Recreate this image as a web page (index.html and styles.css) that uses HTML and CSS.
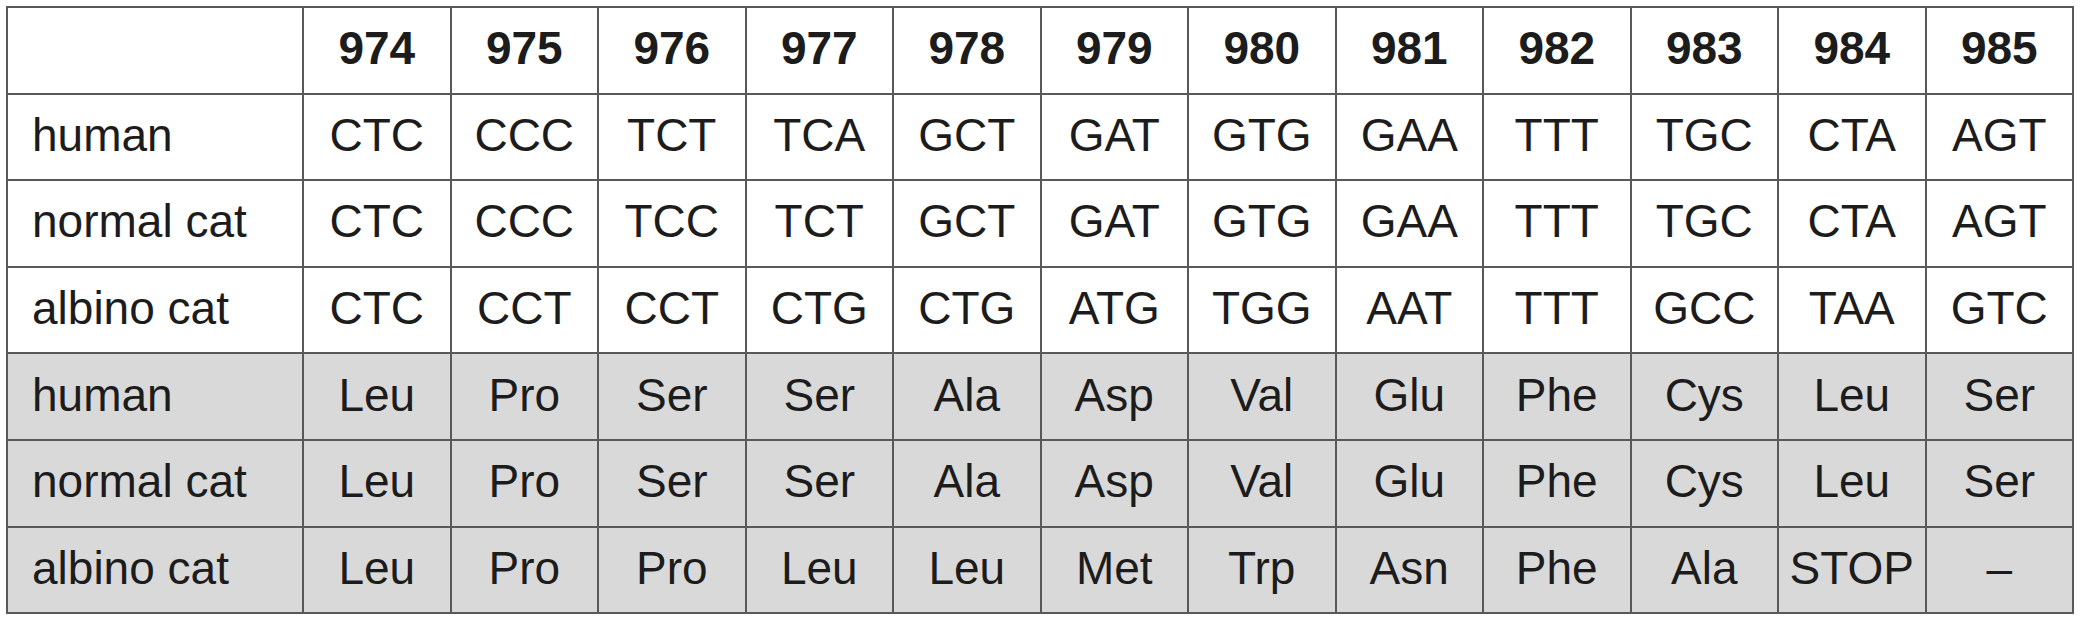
FILE: index.html
```html
<!DOCTYPE html>
<html>
<head>
<meta charset="utf-8">
<link rel="stylesheet" href="styles.css">
</head>
<body>
<table class="codons">
  <colgroup>
    <col class="label-col">
    <col span="12">
  </colgroup>
  <thead>
    <tr>
      <th></th><th>974</th><th>975</th><th>976</th><th>977</th><th>978</th><th>979</th><th>980</th><th>981</th><th>982</th><th>983</th><th>984</th><th>985</th>
    </tr>
  </thead>
  <tbody>
    <tr>
      <td class="label">human</td><td>CTC</td><td>CCC</td><td>TCT</td><td>TCA</td><td>GCT</td><td>GAT</td><td>GTG</td><td>GAA</td><td>TTT</td><td>TGC</td><td>CTA</td><td>AGT</td>
    </tr>
    <tr>
      <td class="label">normal cat</td><td>CTC</td><td>CCC</td><td>TCC</td><td>TCT</td><td>GCT</td><td>GAT</td><td>GTG</td><td>GAA</td><td>TTT</td><td>TGC</td><td>CTA</td><td>AGT</td>
    </tr>
    <tr>
      <td class="label">albino cat</td><td>CTC</td><td>CCT</td><td>CCT</td><td>CTG</td><td>CTG</td><td>ATG</td><td>TGG</td><td>AAT</td><td>TTT</td><td>GCC</td><td>TAA</td><td>GTC</td>
    </tr>
    <tr class="shaded">
      <td class="label">human</td><td>Leu</td><td>Pro</td><td>Ser</td><td>Ser</td><td>Ala</td><td>Asp</td><td>Val</td><td>Glu</td><td>Phe</td><td>Cys</td><td>Leu</td><td>Ser</td>
    </tr>
    <tr class="shaded">
      <td class="label">normal cat</td><td>Leu</td><td>Pro</td><td>Ser</td><td>Ser</td><td>Ala</td><td>Asp</td><td>Val</td><td>Glu</td><td>Phe</td><td>Cys</td><td>Leu</td><td>Ser</td>
    </tr>
    <tr class="shaded">
      <td class="label">albino cat</td><td>Leu</td><td>Pro</td><td>Pro</td><td>Leu</td><td>Leu</td><td>Met</td><td>Trp</td><td>Asn</td><td>Phe</td><td>Ala</td><td>STOP</td><td>–</td>
    </tr>
  </tbody>
</table>
</body>
</html>
```
FILE: styles.css
```css
html, body {
  margin: 0;
  background: #ffffff;
}
body {
  padding: 6px 0 0 6px;
  font-family: "Liberation Sans", Arial, sans-serif;
  color: #1c1c1c;
}
.codons {
  border-collapse: collapse;
  table-layout: fixed;
  width: 2068px;
}
.label-col {
  width: 296px;
}
.codons th,
.codons td {
  border: 2px solid #595959;
  height: 80.6px;
  padding: 0 0 4px 0;
  text-align: center;
  vertical-align: middle;
  font-size: 46px;
  line-height: 1;
}
.codons th {
  font-weight: bold;
}
.codons td.label {
  text-align: left;
  padding-left: 24px;
}
.shaded td {
  background: #d9d9d9;
}
```
